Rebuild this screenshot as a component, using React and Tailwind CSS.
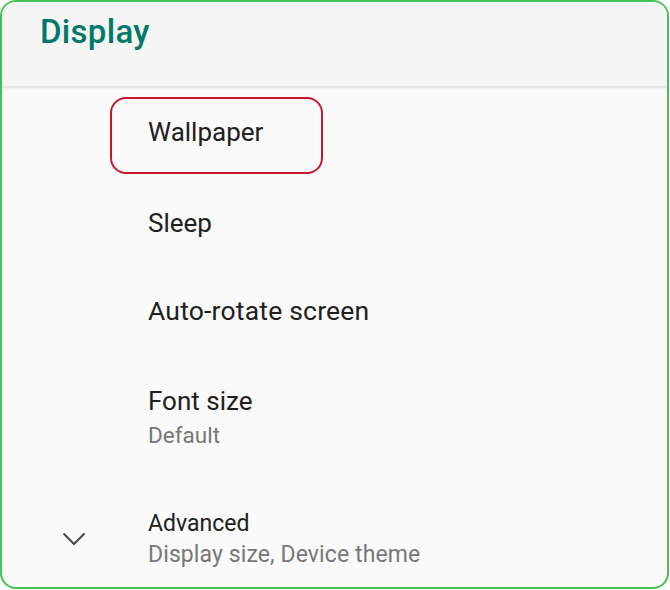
import React from "react";

const font = { fontFamily: "Roboto, 'Noto Sans', sans-serif" };

export default function App() {
  return (
    <div className="w-[670px] h-[590px] bg-white" style={font}>
      <div className="w-[669px] h-[589px] border-2 border-[#45c252] rounded-[16px] overflow-hidden bg-[#fafafa] flex flex-col">
        <div className="h-[85px] bg-[#f5f5f5] shrink-0 pl-[38px] pt-[8px] shadow-[0_1px_3px_rgba(0,0,0,0.12)] relative z-10 border-b border-[#e6e6e6]">
          <div className="text-[33px] font-medium text-[#00796b] leading-[44px] tracking-[0.3px]">Display</div>
        </div>
        <div className="flex flex-col">
          <div className="ml-[108px] mt-[10px] h-[77px] w-[213px] pl-[36px] pt-[17px] border-2 border-[#c8192c] rounded-[16px]">
            <div className="text-[26px] leading-[32px] text-[#202020]">Wallpaper</div>
          </div>
          <div className="pl-[146px] mt-[33px] text-[26px] leading-[32px] text-[#202020]">Sleep</div>
          <div className="pl-[146px] mt-[56px] text-[26.5px] leading-[32px] text-[#202020] tracking-[0.2px]">Auto-rotate screen</div>
          <div className="pl-[146px] mt-[58px] flex flex-col">
            <div className="text-[26px] leading-[32px] text-[#202020]">Font size</div>
            <div className="mt-[3px] text-[22.5px] leading-[30px] text-[#777777]">Default</div>
          </div>
          <div className="mt-[59px] flex items-start">
            <div className="w-[146px] pl-[60px] pt-[23px] shrink-0">
              <svg width="24" height="14" viewBox="0 0 24 14">
                <path d="M1.5 1.5 L12 12 L22.5 1.5" fill="none" stroke="#4a4a4a" strokeWidth="2" />
              </svg>
            </div>
            <div className="flex flex-col">
              <div className="text-[23px] leading-[30px] text-[#202020]">Advanced</div>
              <div className="mt-[1px] text-[23px] leading-[30px] text-[#777777] tracking-[0.1px]">Display size, Device theme</div>
            </div>
          </div>
        </div>
      </div>
    </div>
  );
}
